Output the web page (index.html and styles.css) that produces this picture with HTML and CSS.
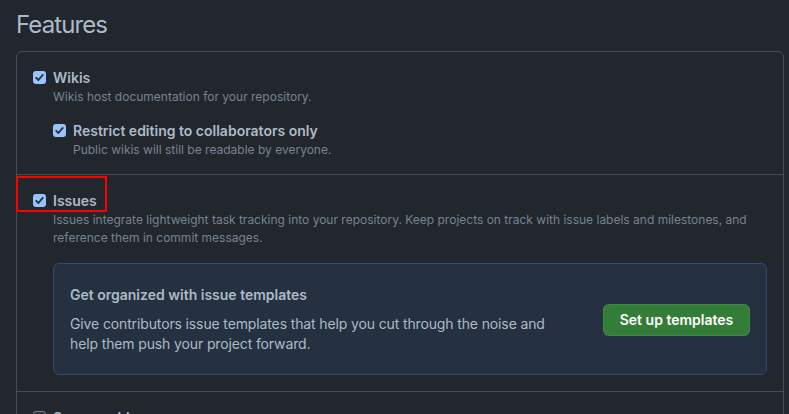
FILE: index.html
```html
<!DOCTYPE html>
<html lang="en">
<head>
<meta charset="utf-8">
<title>Features</title>
<link rel="stylesheet" href="styles.css">
</head>
<body>
<main class="page">
  <h2 class="title">Features</h2>
  <div class="box">
    <div class="row">
      <div class="check">
        <span class="cb on"><svg viewBox="0 0 13 13" width="13" height="13"><path d="M3.2 6.8 L5.4 9 L9.8 3.9" fill="none" stroke="#2d333b" stroke-width="1.9" stroke-linecap="round" stroke-linejoin="round"/></svg></span>
        <div class="check-body">
          <div class="label">Wikis</div>
          <p class="note">Wikis host documentation for your repository.</p>
          <div class="check nested">
            <span class="cb on"><svg viewBox="0 0 13 13" width="13" height="13"><path d="M3.2 6.8 L5.4 9 L9.8 3.9" fill="none" stroke="#2d333b" stroke-width="1.9" stroke-linecap="round" stroke-linejoin="round"/></svg></span>
            <div class="check-body">
              <div class="label">Restrict editing to collaborators only</div>
              <p class="note">Public wikis will still be readable by everyone.</p>
            </div>
          </div>
        </div>
      </div>
    </div>
    <div class="row issues">
      <div class="check">
        <span class="cb on"><svg viewBox="0 0 13 13" width="13" height="13"><path d="M3.2 6.8 L5.4 9 L9.8 3.9" fill="none" stroke="#2d333b" stroke-width="1.9" stroke-linecap="round" stroke-linejoin="round"/></svg></span>
        <div class="check-body">
          <div class="label">Issues</div>
          <p class="note">Issues integrate lightweight task tracking into your repository. Keep projects on track with issue labels and milestones, and reference them in commit messages.</p>
        </div>
      </div>
      <div class="promo">
        <div class="promo-text">
          <h3 class="promo-title">Get organized with issue templates</h3>
          <p class="promo-desc">Give contributors issue templates that help you cut through the noise and help them push your project forward.</p>
        </div>
        <button class="btn" type="button">Set up templates</button>
      </div>
      <span class="highlight"></span>
    </div>
    <div class="row">
      <div class="check">
        <span class="cb"></span>
        <div class="check-body">
          <div class="label">Sponsorships</div>
          <p class="note">Sponsorships help your community know how to financially support this repository.</p>
        </div>
      </div>
    </div>
  </div>
</main>
</body>
</html>
```

FILE: styles.css
```css
* { box-sizing: border-box; }
html, body {
  margin: 0;
  background: #22272e;
  overflow: hidden;
}
body {
  font-family: Inter, "Liberation Sans", sans-serif;
  color: #adbac7;
  font-size: 14px;
  height: 414px;
}
.page {
  padding: 0 5px 0 16px;
}
.title {
  margin: 10px 0 11px;
  font-size: 24px;
  line-height: 30px;
  font-weight: 400;
  letter-spacing: -0.9px;
  color: #adbac7;
}
.box {
  border: 1px solid #444c56;
  border-radius: 6px;
}
.row {
  position: relative;
  padding: 16px 16px 15px;
  border-top: 1px solid #444c56;
}
.row:first-child { border-top: 0; }
.row.issues { padding-bottom: 16px; }
.check {
  display: flex;
  align-items: flex-start;
}
.check.nested { margin-top: 15px; }
.cb {
  flex: none;
  width: 13px;
  height: 13px;
  margin-top: 3px;
  margin-right: 7px;
  border-radius: 3px;
  border: 1px solid #768390;
  background: #2d333b;
  display: flex;
}
.cb.on {
  border: 0;
  background: #99c3ff;
}
.check-body { flex: 1; }
.label {
  font-weight: 600;
  font-size: 14px;
  line-height: 20px;
  color: #adbac7;
}
.note {
  margin: 0;
  font-size: 12px;
  line-height: 18px;
  color: #768390;
}
.promo {
  margin: 16px 0 0 20px;
  display: flex;
  align-items: center;
  padding: 21px 16px 20px;
  background: #253040;
  border: 1px solid #2f4a73;
  border-radius: 6px;
}
.promo-text { width: 490px; }
.promo-title {
  margin: 0 0 9px;
  font-size: 14px;
  line-height: 20px;
  font-weight: 600;
  color: #adbac7;
}
.promo-desc {
  margin: 0;
  font-size: 14px;
  line-height: 20px;
  letter-spacing: -0.13px;
  color: #adbac7;
}
.btn {
  margin-left: auto;
  width: 147px;
  height: 32px;
  font-family: inherit;
  font-size: 14px;
  font-weight: 600;
  white-space: nowrap;
  color: #fff;
  background: #347d39;
  border: 1px solid rgba(205, 217, 229, 0.1);
  border-radius: 6px;
  padding: 0 8px;
}
.highlight {
  position: absolute;
  left: -1px;
  top: 1px;
  width: 91px;
  height: 36px;
  border: 2px solid #ff0000;
}
```
